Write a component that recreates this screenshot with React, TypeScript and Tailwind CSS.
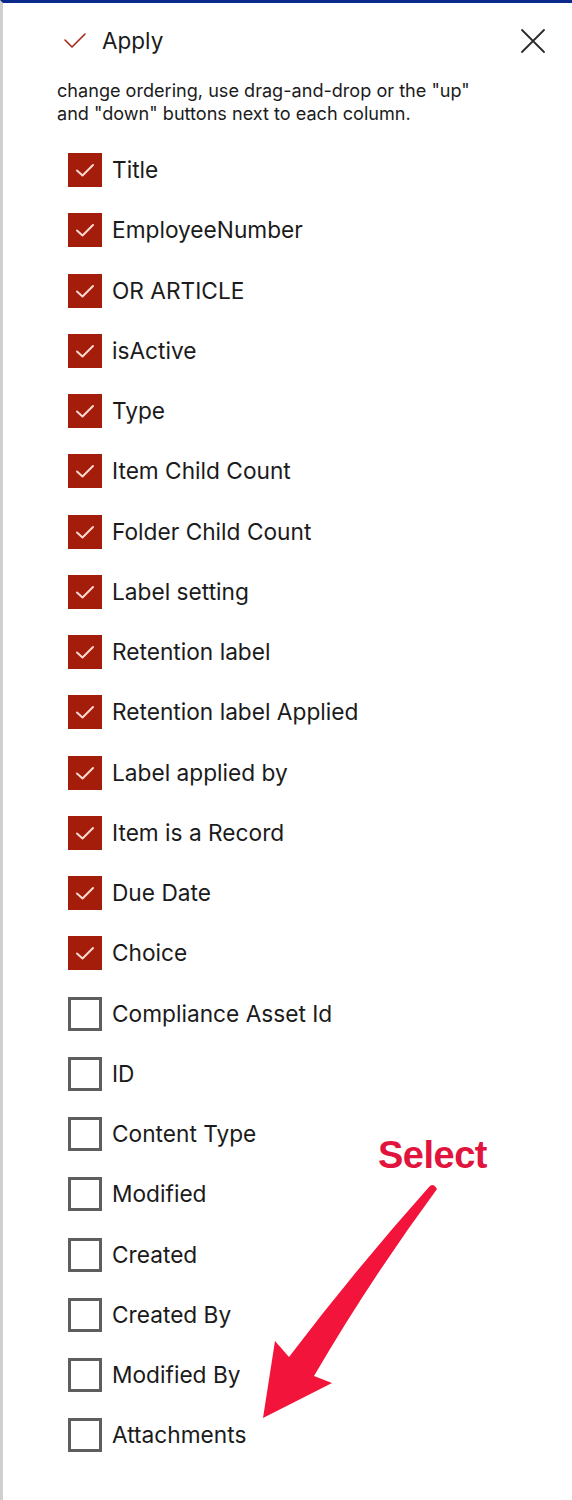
import React from "react";

const items: [string, boolean][] = [
  ["Title", true],
  ["EmployeeNumber", true],
  ["OR ARTICLE", true],
  ["isActive", true],
  ["Type", true],
  ["Item Child Count", true],
  ["Folder Child Count", true],
  ["Label setting", true],
  ["Retention label", true],
  ["Retention label Applied", true],
  ["Label applied by", true],
  ["Item is a Record", true],
  ["Due Date", true],
  ["Choice", true],
  ["Compliance Asset Id", false],
  ["ID", false],
  ["Content Type", false],
  ["Modified", false],
  ["Created", false],
  ["Created By", false],
  ["Modified By", false],
  ["Attachments", false],
];

function Box({ checked }: { checked: boolean }) {
  if (checked) {
    return (
      <div className="w-[34px] h-[34px] shrink-0 bg-[#a41d0b] flex items-center justify-center">
        <svg width="34" height="34" viewBox="0 0 34 34">
          <path d="M9 17.5 L14.5 22.5 L25 12" fill="none" stroke="#f8d9cf" strokeWidth="2" strokeLinecap="round" strokeLinejoin="round" />
        </svg>
      </div>
    );
  }
  return <div className="w-[34px] h-[34px] shrink-0 border-[3px] border-[#5e5e5e] bg-white" />;
}

export default function App() {
  return (
    <div
      className="relative w-[572px] h-[1500px] bg-white border-t-[3px] border-t-[#0b2a8c] border-l-[3px] border-l-[#cfcfcf] overflow-hidden"
      style={{ fontFamily: 'Inter, "Liberation Sans", Arial, sans-serif' }}
    >
      <div className="h-[76px] flex items-center pl-[58px] pr-[26px]">
        <svg width="26" height="22" viewBox="0 0 26 22" className="shrink-0">
          <path d="M4 10 L11 17 L24 4" fill="none" stroke="#a8281a" strokeWidth="1.6" strokeLinecap="round" strokeLinejoin="round" />
        </svg>
        <span className="ml-[15px] text-[22.5px] text-[#1b1b1b]">Apply</span>
        <div className="flex-1" />
        <svg width="26" height="26" viewBox="0 0 26 26" className="shrink-0">
          <path d="M2 2 L24 24 M24 2 L2 24" stroke="#2a2a2a" strokeWidth="1.8" strokeLinecap="round" />
        </svg>
      </div>
      <div className="pl-[54px] pr-[40px] text-[18.1px] leading-[23px] text-[#1b1b1b]">
        <p>change ordering, use drag-and-drop or the "up"</p>
        <p>and "down" buttons next to each column.</p>
      </div>
      <div className="mt-[15px] pl-[65px] flex flex-col">
        {items.map(([label, checked]) => (
          <div key={label} className="h-[60.25px] flex items-center gap-[10px]">
            <Box checked={checked} />
            <span className="text-[22.7px] text-[#1b1b1b]">{label}</span>
          </div>
        ))}
      </div>
      <div
        className="absolute left-[375px] top-[1124px] text-[38px] font-bold text-[#e0143c] tracking-[-0.5px]"
        style={{ fontFamily: '"Liberation Sans", Arial, sans-serif' }}
      >
        Select
      </div>
      <svg className="absolute left-0 top-0" width="572" height="1500" viewBox="3 3 572 1500" style={{ pointerEvents: "none" }}>
        <path
          d="M429 1187 Q433 1182 437 1189 Q370 1280 314 1376 L332 1383 L263 1418 L275 1341 L289 1357 Q355 1270 429 1187 Z"
          fill="#f2143a"
        />
      </svg>
    </div>
  );
}
